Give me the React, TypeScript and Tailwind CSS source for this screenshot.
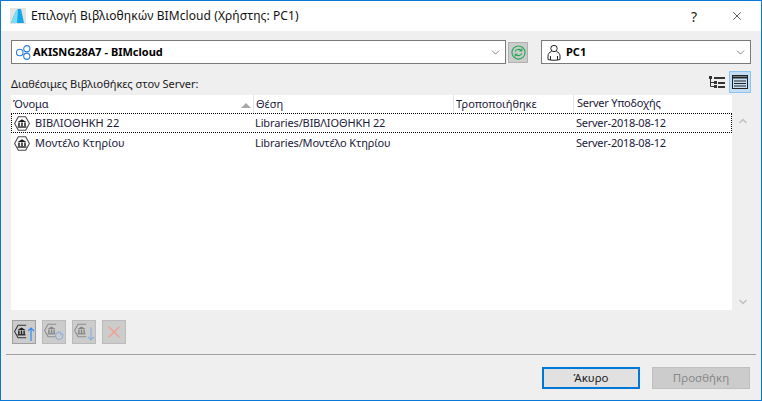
import { ChevronDown, ChevronUp, X } from 'lucide-react';

const Bank = ({ className = '' }: { className?: string }) => (
  <svg viewBox="0 0 16 15" className={className} fill="none">
    <path d="M4.3 0.8h7.4L15.4 7.5l-3.7 6.7H4.3L0.6 7.5z" stroke="#4a4a4a" strokeWidth="1.1" />
    <path d="M3.6 6L8 3.2 12.4 6z" fill="#1c1c1c" />
    <path d="M5 6.5v3.6M8 6.5v3.6M11 6.5v3.6" stroke="#1c1c1c" strokeWidth="1.5" />
    <path d="M3.6 11h8.8" stroke="#1c1c1c" strokeWidth="1.4" />
  </svg>
);

// hexagon open on the right, the arrow sits there
const ToolBank = ({ className = '' }: { className?: string }) => (
  <svg viewBox="0 0 16 15" className={className} fill="none">
    <path d="M13 0.8H4.3L0.6 7.5l3.7 6.7H13" stroke="#333" strokeWidth="1.1" />
    <path d="M3.8 6L8 3.2 12.2 6z" fill="#1c1c1c" />
    <path d="M5.2 6.5v3.6M8 6.5v3.6M10.8 6.5v3.6" stroke="#1c1c1c" strokeWidth="1.5" />
    <path d="M3.8 11h8.4" stroke="#1c1c1c" strokeWidth="1.4" />
  </svg>
);

const Row = ({ name, focused }: { name: string; focused?: boolean }) => (
  <div className={`grid grid-cols-[243px_200px_120px_1fr] h-5 items-center border border-dotted ${focused ? 'border-black' : 'border-transparent'}`}>
    <div className="flex items-center gap-[5px] pl-[2px]">
      <Bank className="w-[16px] h-[15px]" />
      <span>{name}</span>
    </div>
    <span className="tracking-[-0.12px]">Libraries/{name}</span>
    <span />
    <span className="pl-[1px] tracking-[-0.25px]">Server-2018-08-12</span>
  </div>
);

const HeaderCell = ({ label, arrow }: { label: string; arrow?: boolean }) => (
  <div className="flex items-center justify-between pl-[2px] pr-[2px] border-r border-[#e4e4e4]">
    <span>{label}</span>
    {arrow && <span className="w-0 h-0 border-x-[5px] border-x-transparent border-b-[5px] border-b-[#a8a8a8] mt-[3px]" />}
  </div>
);

const ToolButton = ({ active, children }: { active?: boolean; children: React.ReactNode }) => (
  <div className={`w-6 h-6 flex items-center justify-center border bg-[#cccccc] ${active ? 'border-[#a0a0a0]' : 'border-[#bbbbbb]'}`}>
    {children}
  </div>
);

const App = () => {
  return (
    <div className="w-[762px] h-[401px] flex flex-col bg-[#efefef] border border-[#0a78d7] text-[11px] text-[#1a1a1a] overflow-hidden font-['Noto_Sans',sans-serif]">
      {/* title bar */}
      <div className="h-[30px] shrink-0 bg-white flex items-center pl-[9px] pr-[17px]">
        <svg viewBox="0 0 16 16" className="w-4 h-4 mr-[4px]">
          <rect width="16" height="16" fill="#e4e4e4" />
          <path d="M1 15C3 10 5 3 8 1h3l3 14z" fill="#14a6e6" />
          <path d="M1 15C3 10 5 3 8 1l-1 14z" fill="#7fdcf5" />
        </svg>
        <span className="text-[12px] ml-[1px] text-[#111] tracking-[0.09px]">Επιλογή Βιβλιοθηκών BIMcloud (Χρήστης: PC1)</span>
        <span className="ml-auto text-[14px] mr-[33px]">?</span>
        <X className="w-[14px] h-[14px]" strokeWidth={1.2} />
      </div>

      <div className="flex-1 flex flex-col px-[10px]">
        {/* server and user */}
        <div className="flex items-center mt-[9px] h-6">
          <div className="w-[495px] h-6 bg-white border border-[#7a7a7a] flex items-center pl-[3px] pr-[3px]">
            <svg viewBox="0 0 18 16" className="w-[17px] h-[15px] mr-[1px]" fill="none" stroke="#2f7fe0" strokeWidth="1.2">
              <circle cx="5" cy="8" r="3.5" />
              <circle cx="12.5" cy="4" r="3.3" />
              <circle cx="12.5" cy="12" r="3.3" />
            </svg>
            <span className="font-bold text-[11px] text-black">AKISNG28A7 - BIMcloud</span>
            <ChevronDown className="ml-auto w-[13px] h-[13px] text-[#555]" strokeWidth={1.3} />
          </div>
          <div className="w-5 h-[21px] ml-[2px] bg-[#cccccc] border border-[#b0b0b0] flex items-center justify-center">
            <svg viewBox="0 0 16 16" className="w-[15px] h-[15px]" fill="none" stroke="#1fa855" strokeWidth="1.2">
              <circle cx="8" cy="8" r="7" />
              <path d="M4.5 7C5 4.8 8.5 3.8 10.8 5.5M11.5 9C11 11.2 7.5 12.2 5.2 10.5" />
              <path d="M11.5 3.8v2.4H9M4.5 12.2V9.8H7" />
            </svg>
          </div>
          <div className="w-[210px] h-6 ml-[13px] bg-white border border-[#7a7a7a] flex items-center pl-[5px] pr-[3px]">
            <svg viewBox="0 0 14 17" className="w-[14px] h-[17px] mr-[5px]" fill="none" stroke="#222" strokeWidth="1">
              <circle cx="7" cy="4.5" r="3.2" />
              <path d="M4.5 7.5C2 8.5 1 10 1 12v3.5c3 1 9 1 12 0V12c0-2-1-3.5-3.5-4.5" />
              <path d="M3.5 12v4M10.5 12v4" />
            </svg>
            <span className="font-bold text-[11px] text-black">PC1</span>
            <ChevronDown className="ml-auto w-[13px] h-[13px] text-[#555]" strokeWidth={1.3} />
          </div>
        </div>

        {/* label and view switch */}
        <div className="flex items-end justify-between h-[31px]">
          <span className="mb-[3px] leading-4">Διαθέσιμες Βιβλιοθήκες στον Server:</span>
          <div className="flex items-center gap-[4px] mb-[2px]">
            <svg viewBox="0 0 16 12" className="w-4 h-3">
              <path d="M0 0h3v3H0zM5 1h11v2H5zM5 5h3v3H5zM9 6h7v2H9zM5 9h3v3H5zM9 10h7v2H9z" fill="#333" />
              <path d="M1.5 3v7.5H5M1.5 6.5H5" stroke="#333" fill="none" />
            </svg>
            <div className="w-[22px] h-[22px] bg-[#c4dff5] border border-[#8fc3ef] flex items-center justify-center">
              <svg viewBox="0 0 16 14" className="w-4 h-[14px]" fill="none" stroke="#222">
                <rect x="0.5" y="0.5" width="15" height="13" />
                <path d="M0 2.5h16" strokeWidth="2" />
                <path d="M2 6h12M2 8.5h12M2 11h12" />
              </svg>
            </div>
          </div>
        </div>

        {/* library list */}
        <div className="flex h-[215px]">
          <div className="w-[723px] bg-white flex flex-col text-[#1a1a3a]">
            <div className="grid grid-cols-[243px_200px_120px_1fr] h-[18px] shrink-0">
              <HeaderCell label="Όνομα" arrow />
              <HeaderCell label="Θέση" />
              <HeaderCell label="Τροποποιήθηκε" />
              <div className="pl-[3px] tracking-[-0.25px]">Server Υποδοχής</div>
            </div>
            <Row name="ΒΙΒΛΙΟΘΗΚΗ 22" focused />
            <Row name="Μοντέλο Κτηρίου" />
          </div>
          <div className="w-[17px] ml-[2px] flex flex-col items-center justify-between pt-[20px] pb-[2px] text-[#c4c4c4]">
            <ChevronUp className="w-[12px] h-[12px]" strokeWidth={3.5} />
            <ChevronDown className="w-[12px] h-[12px]" strokeWidth={3.5} />
          </div>
        </div>

        {/* library actions */}
        <div className="flex gap-[6px] mt-[10px] pl-[1px]">
          <ToolButton active>
            <div className="relative w-[21px] h-[18px]">
              <ToolBank className="w-[15px] h-[15px] mt-[1px]" />
              <svg viewBox="0 0 8 14" className="absolute right-0 bottom-0 w-2 h-[14px]" fill="none" stroke="#2f8cf5" strokeWidth="1.2">
                <path d="M4 14V1M1 4l3-3 3 3" />
              </svg>
            </div>
          </ToolButton>
          <ToolButton>
            <div className="relative w-[21px] h-[18px] opacity-40">
              <ToolBank className="w-[15px] h-[15px]" />
              <svg viewBox="0 0 12 10" className="absolute right-0 bottom-0 w-[11px] h-[10px]" fill="none" stroke="#2f8cf5" strokeWidth="1.2">
                <path d="M9.5 3.5a4 4 0 1 1-2.5-2.5M7 0v3h3" />
              </svg>
            </div>
          </ToolButton>
          <ToolButton>
            <div className="relative w-[21px] h-[18px] opacity-40">
              <ToolBank className="w-[15px] h-[15px]" />
              <svg viewBox="0 0 8 14" className="absolute right-0 bottom-0 w-2 h-[14px]" fill="none" stroke="#2f8cf5" strokeWidth="1.2">
                <path d="M4 0v13M1 10l3 3 3-3" />
              </svg>
            </div>
          </ToolButton>
          <ToolButton>
            <X className="w-[20px] h-[20px] text-[#f0a090]" strokeWidth={1.6} />
          </ToolButton>
        </div>

        <div className="h-[1px] bg-[#a0a0a0] mt-[10px] -mx-[5px] shrink-0" />

        {/* dialog buttons */}
        <div className="flex justify-end gap-[12px] mt-[12px] pr-[1px] text-[11.5px]">
          <div className="w-[98px] h-[22px] bg-[#e1e1e1] border-2 border-[#0078d7] flex items-center justify-center text-[#222]">Άκυρο</div>
          <div className="w-[98px] h-[22px] bg-[#cccccc] border border-[#bfbfbf] flex items-center justify-center text-[#8a8a8a]">Προσθήκη</div>
        </div>
      </div>
    </div>
  );
};

export default App;
